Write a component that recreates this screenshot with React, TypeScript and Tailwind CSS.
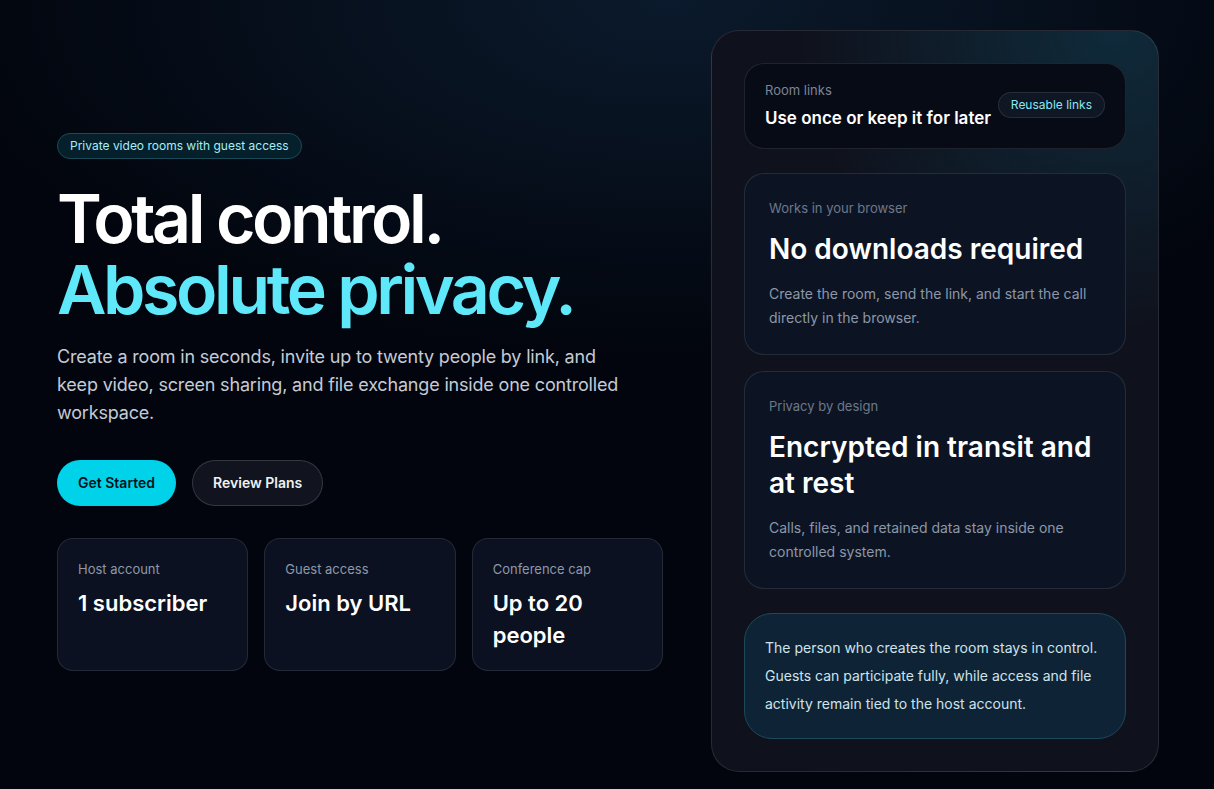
import React from "react";

const stats = [
  { label: "Host account", value: "1 subscriber" },
  { label: "Guest access", value: "Join by URL" },
  { label: "Conference cap", value: "Up to 20 people" },
];

const features = [
  {
    label: "Works in your browser",
    title: "No downloads required",
    body: "Create the room, send the link, and start the call directly in the browser.",
  },
  {
    label: "Privacy by design",
    title: "Encrypted in transit and at rest",
    body: "Calls, files, and retained data stay inside one controlled system.",
  },
];

export default function App() {
  return (
    <div
      className="min-h-screen bg-[#02050d] bg-[radial-gradient(ellipse_60%_45%_at_55%_0%,#0b1a2c_0%,rgba(2,5,13,0)_100%)] text-white"
      style={{ fontFamily: "Inter, 'Noto Sans', sans-serif" }}
    >
      <div className="grid grid-cols-[minmax(0,1fr)_448px] items-center gap-12 pb-[18px] pl-[57px] pr-[55px] pt-[30px]">
        {/* Left hero column */}
        <section>
          <span className="inline-flex items-center rounded-full border border-[#1b4a57] bg-[#05202b] px-3 py-[4px] text-xs text-[#a5eef8]">
            Private video rooms with guest access
          </span>

          <h1 className="mt-6 text-[68px] font-semibold leading-[71px] tracking-[-0.05em]">
            <span className="block text-white">Total control.</span>
            <span className="block text-[#5ee8f9]">Absolute privacy.</span>
          </h1>

          <p className="mt-[18px] max-w-[578px] text-lg leading-7 tracking-[-0.01em] text-[#c4cbd6]">
            Create a room in seconds, invite up to twenty people by link, and keep video, screen sharing, and file
            exchange inside one controlled workspace.
          </p>

          <div className="mt-[33px] flex gap-4">
            <button className="h-[46px] rounded-full bg-[#00d2ea] px-[21px] text-sm font-semibold text-[#04121a]">
              Get Started
            </button>
            <button className="h-[46px] rounded-full border border-white/15 bg-[#11141e] px-5 text-sm font-semibold text-[#eef1f5]">
              Review Plans
            </button>
          </div>

          <div className="mt-8 grid grid-cols-3 gap-4">
            {stats.map((s) => (
              <div key={s.label} className="h-[133px] rounded-2xl border border-white/10 bg-[#0b1120] px-5 pt-[21px]">
                <p className="text-[13px] text-[#8e98a8]">{s.label}</p>
                <p className="mt-[8px] text-[22px] font-semibold leading-8 text-white">{s.value}</p>
              </div>
            ))}
          </div>
        </section>

        {/* Right panel */}
        <aside className="rounded-[28px] border border-white/10 bg-[#0f121d] bg-[radial-gradient(ellipse_70%_40%_at_90%_0%,#0f2a3a_0%,rgba(15,18,29,0)_100%)] p-8">
          <div className="flex flex-col gap-6">
            <div className="flex items-center justify-between rounded-[20px] border border-white/10 bg-[#070b16] px-5 pb-[18px] pt-4">
              <div>
                <p className="text-[13px] leading-5 text-[#7c8596]">Room links</p>
                <p className="mt-[6px] text-[17px] font-semibold leading-6 text-white">Use once or keep it for later</p>
              </div>
              <span className="rounded-full border border-white/10 bg-[#0f1624] px-3 py-[4px] text-xs text-[#8ae6f3]">
                Reusable links
              </span>
            </div>

            <div className="flex flex-col gap-4">
              {features.map((f) => (
                <div key={f.label} className="rounded-[20px] border border-white/10 bg-[#0c1424] px-6 pb-6 pt-6">
                  <p className="text-[13px] leading-5 text-[#6e7889]">{f.label}</p>
                  <h3 className="mt-[13px] text-[28px] font-semibold leading-9 text-white">{f.title}</h3>
                  <p className="mt-[15px] text-sm leading-6 text-[#8d97a8]">{f.body}</p>
                </div>
              ))}
            </div>

            <div className="rounded-[28px] border border-[#1d4a58] bg-[#0e2436] px-5 py-5">
              <p className="text-sm leading-7 text-[#cfe3ea]">
                The person who creates the room stays in control. Guests can participate fully, while access and file
                activity remain tied to the host account.
              </p>
            </div>
          </div>
        </aside>
      </div>
    </div>
  );
}
